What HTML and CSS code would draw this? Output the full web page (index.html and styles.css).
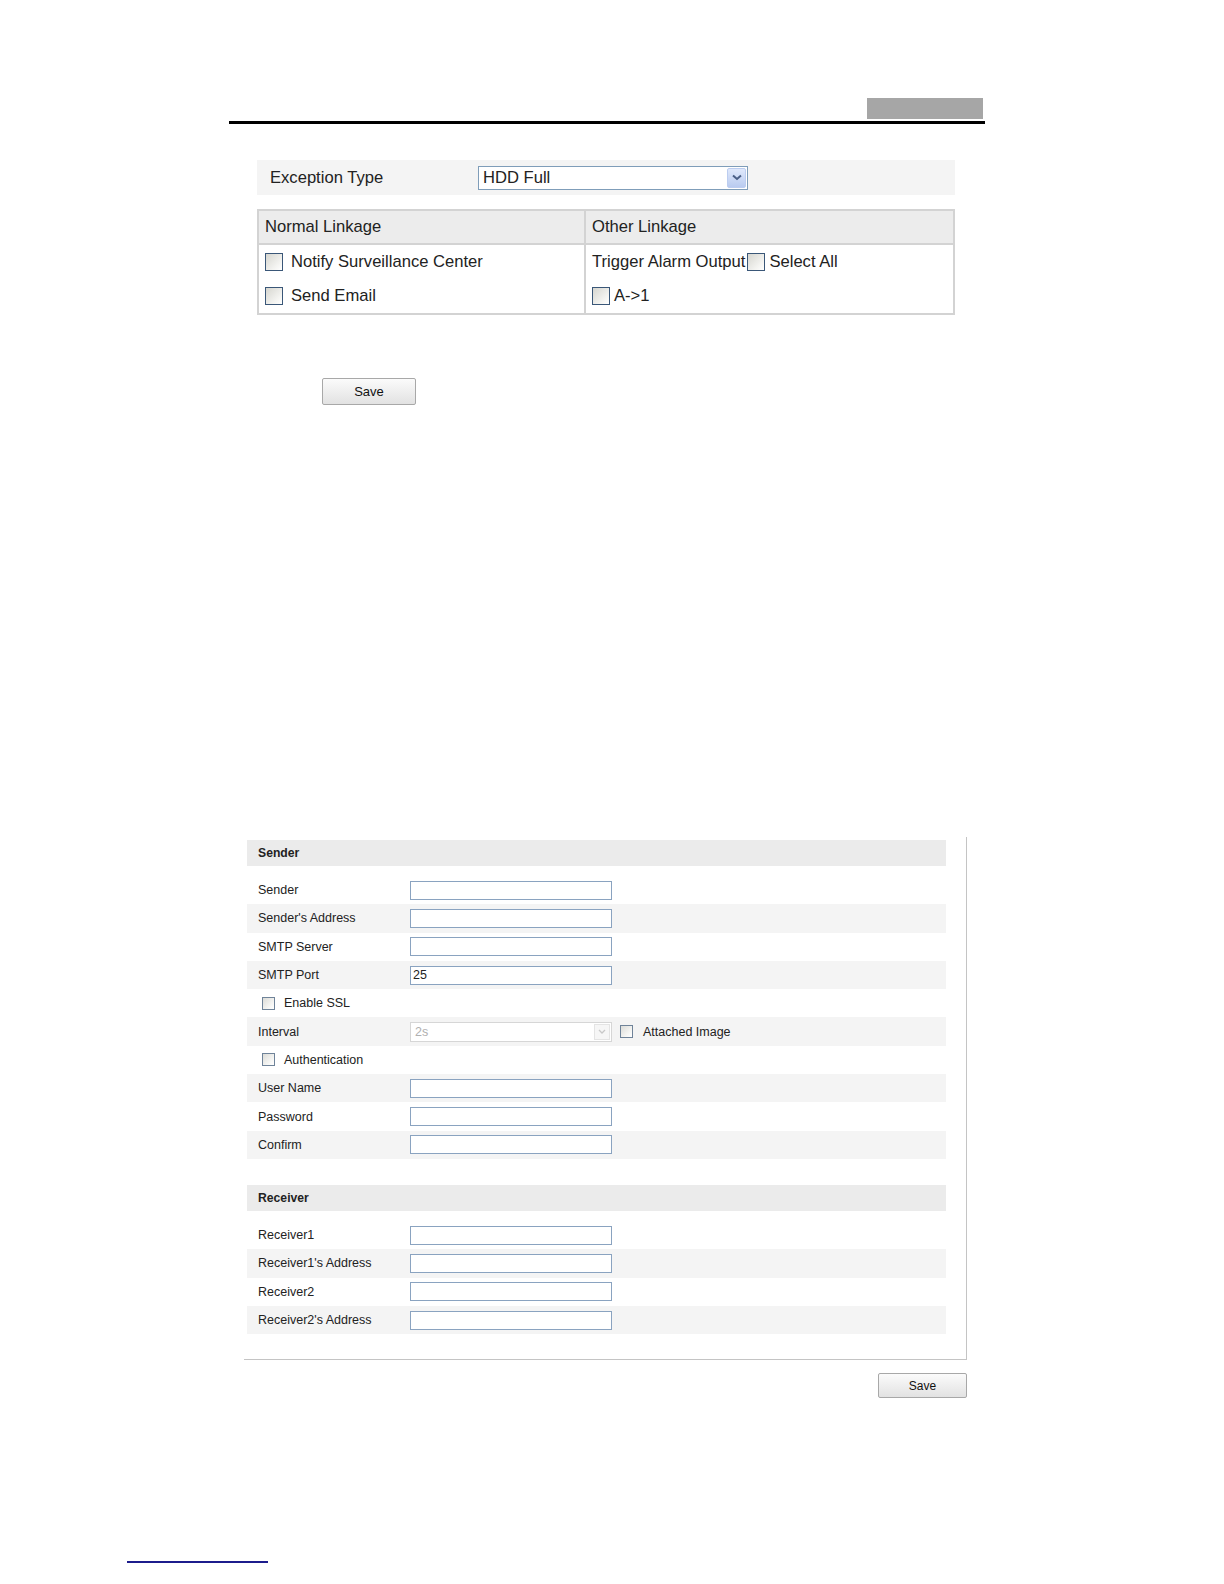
FILE: index.html
```html
<!DOCTYPE html>
<html>
<head>
<meta charset="utf-8">
<link rel="stylesheet" href="styles.css">
</head>
<body>
<div class="page">
  <div class="hdr">
    <div class="tab"></div>
    <div class="rule"></div>
  </div>

  <div class="top">
    <div class="exc">
      <span class="exc-label">Exception Type</span>
      <div class="sel">
        <span class="sel-text">HDD Full</span>
        <span class="sel-btn"><svg width="10" height="7" viewBox="0 0 10 7"><path d="M1 1.5 L5 5 L9 1.5" fill="none" stroke="#4a5f86" stroke-width="2"/></svg></span>
      </div>
    </div>

    <div class="lt">
      <div class="lt-head lt-left">Normal Linkage</div>
      <div class="lt-head">Other Linkage</div>
      <div class="lt-body lt-left">
        <div class="lt-line"><span class="cb"></span><span class="lt-txt">Notify Surveillance Center</span></div>
        <div class="lt-line"><span class="cb"></span><span class="lt-txt">Send Email</span></div>
      </div>
      <div class="lt-body">
        <div class="lt-line"><span>Trigger Alarm Output</span><span class="cb cb-tight"></span><span class="lt-txt2">Select All</span></div>
        <div class="lt-line"><span class="cb"></span><span class="lt-txt2">A-&gt;1</span></div>
      </div>
    </div>

    <div class="btn btn1">Save</div>
  </div>

  <div class="panel">
    <div class="sec-head">Sender</div>
    <div class="rows">
      <div class="row"><span class="lbl">Sender</span><span class="inp"></span></div>
      <div class="row alt"><span class="lbl">Sender's Address</span><span class="inp"></span></div>
      <div class="row"><span class="lbl">SMTP Server</span><span class="inp"></span></div>
      <div class="row alt"><span class="lbl">SMTP Port</span><span class="inp">25</span></div>
      <div class="row chk"><span class="cbs"></span><span>Enable SSL</span></div>
      <div class="row alt"><span class="lbl">Interval</span><span class="inp dis">2s<span class="dis-btn"><svg width="8" height="5" viewBox="0 0 8 5"><path d="M1 1 L4 4 L7 1" fill="none" stroke="#c8c8c8" stroke-width="1.3"/></svg></span></span><span class="cbs cbs-att"></span><span>Attached Image</span></div>
      <div class="row chk"><span class="cbs"></span><span>Authentication</span></div>
      <div class="row alt"><span class="lbl">User Name</span><span class="inp"></span></div>
      <div class="row"><span class="lbl">Password</span><span class="inp"></span></div>
      <div class="row alt"><span class="lbl">Confirm</span><span class="inp"></span></div>
    </div>

    <div class="sec-head sec-head2">Receiver</div>
    <div class="rows">
      <div class="row"><span class="lbl">Receiver1</span><span class="inp"></span></div>
      <div class="row alt"><span class="lbl">Receiver1's Address</span><span class="inp"></span></div>
      <div class="row"><span class="lbl">Receiver2</span><span class="inp"></span></div>
      <div class="row alt"><span class="lbl">Receiver2's Address</span><span class="inp"></span></div>
    </div>
  </div>

  <div class="btn btn2">Save</div>

  <div class="foot-line"></div>
</div>
</body>
</html>
```

FILE: styles.css
```css
* { box-sizing: border-box; }
html, body { margin: 0; padding: 0; background: #fff; }
body {
  width: 1224px;
  height: 1584px;
  font-family: "Liberation Sans", Arial, sans-serif;
  color: #222;
  overflow: hidden;
}
.page { padding-top: 98px; }

.hdr { margin-left: 229px; width: 756px; }
.tab { margin-left: 638px; width: 116px; height: 21px; background: #a6a6a6; }
.rule { margin-top: 2px; height: 3px; background: #000; }

.top { margin: 36px 0 0 257px; width: 698px; font-size: 16.6px; }
.exc {
  height: 35px;
  background: #f4f4f4;
  display: flex;
  align-items: center;
  padding-left: 13px;
}
.exc-label { width: 208px; }
.sel {
  width: 270px;
  height: 24px;
  border: 1px solid #7f9db9;
  background: #fff;
  display: flex;
  align-items: center;
  justify-content: space-between;
  padding: 0 1px 0 4px;
}
.sel-btn {
  width: 19px;
  height: 20px;
  border: 1px solid #bccdf0;
  border-radius: 2px;
  background: linear-gradient(#dfe8fb, #b9cbf0);
  display: flex;
  align-items: center;
  justify-content: center;
}

.lt {
  margin-top: 14px;
  display: grid;
  grid-template-columns: 327px 1fr;
  border: 2px solid #d3d3d3;
}
.lt-head {
  height: 34px;
  background: #ececec;
  border-bottom: 2px solid #d3d3d3;
  display: flex;
  align-items: center;
  padding-left: 6px;
}
.lt-left { border-right: 2px solid #d3d3d3; }
.lt-body { padding: 0 0 0 6px; }
.lt-line { height: 34px; display: flex; align-items: center; }
.lt-body.lt-left { padding-left: 6px; }
.cb {
  width: 18px;
  height: 18px;
  border: 1px solid #3a5778;
  background: linear-gradient(135deg, #d6d6d0, #f4f4f1 70%, #fff);
  flex: none;
}
.lt-txt { margin-left: 8px; }
.cb-tight { margin-left: 2px; }
.lt-txt2 { margin-left: 4px; }

.btn {
  border: 1px solid #a8a8a8;
  border-radius: 2px;
  background: linear-gradient(#fbfbfb, #e2e2e2);
  display: flex;
  align-items: center;
  justify-content: center;
  font-size: 13px;
  color: #111;
}
.btn1 { margin: 63px 0 0 65px; width: 94px; height: 27px; }

.panel {
  margin: 432px 0 0 244px;
  width: 723px;
  border-right: 1px solid #c4c4c4;
  border-bottom: 1px solid #c4c4c4;
  padding: 3px 20px 25px 3px;
  font-size: 12.5px;
}
.sec-head {
  height: 26px;
  background: #ebebeb;
  font-weight: bold;
  font-size: 12.2px;
  display: flex;
  align-items: center;
  padding-left: 11px;
}
.sec-head2 { margin-top: 26px; }
.rows { margin-top: 10px; }
.row {
  height: 28.3px;
  display: flex;
  align-items: center;
  padding-left: 11px;
}
.row.alt { background: #f4f4f4; }
.lbl { width: 152px; }
.inp {
  width: 202px;
  height: 19px;
  border: 1px solid #8aa3c0;
  background: #fff;
  display: flex;
  align-items: center;
  padding-left: 2px;
  position: relative;
}
.inp.dis {
  border-color: #d6d6d6;
  color: #b0b0b0;
  height: 20px;
  padding-left: 4px;
}
.dis-btn {
  position: absolute;
  right: 1px;
  top: 1px;
  width: 16px;
  height: 16px;
  border: 1px solid #e4e4e4;
  background: #f6f6f6;
  display: flex;
  align-items: center;
  justify-content: center;
}
.cbs {
  width: 13px;
  height: 13px;
  border: 1px solid #6f8399;
  background: linear-gradient(135deg, #dcdcd8, #f7f7f5 70%, #fff);
  flex: none;
  margin-right: 9px;
}
.row.chk { padding-left: 15px; }
.cbs-att { margin-left: 8px; margin-right: 10px; }

.btn2 { margin: 13px 0 0 878px; width: 89px; height: 25px; font-size: 12px; }

.foot-line {
  margin: 163px 0 0 127px;
  width: 141px;
  height: 2px;
  background: #1c1c8c;
}
```
